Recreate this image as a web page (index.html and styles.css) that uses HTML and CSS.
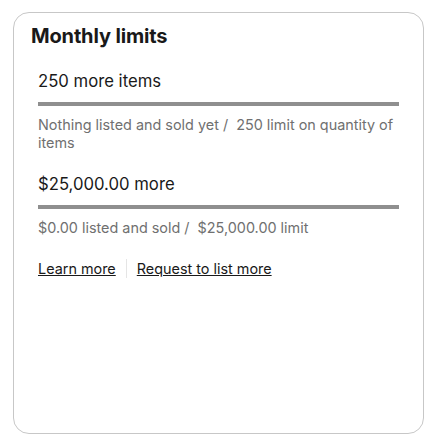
FILE: index.html
```html
<!DOCTYPE html>
<html>
<head>
<meta charset="utf-8">
<link rel="stylesheet" href="styles.css">
</head>
<body>
<section class="card">
  <h2 class="title">Monthly limits</h2>
  <div class="content">
    <div class="limit">
      <div class="amount">250 more items</div>
      <div class="bar"></div>
      <div class="desc">Nothing listed and sold yet /&nbsp; 250 limit on quantity of items</div>
    </div>
    <div class="limit">
      <div class="amount">$25,000.00 more</div>
      <div class="bar"></div>
      <div class="desc">$0.00 listed and sold /&nbsp; $25,000.00 limit</div>
    </div>
    <div class="links">
      <a href="#" class="link">Learn more</a>
      <span class="sep"></span>
      <a href="#" class="link">Request to list more</a>
    </div>
  </div>
</section>
</body>
</html>
```
FILE: styles.css
```css
html, body {
  margin: 0;
  padding: 0;
  background: #fff;
}
body {
  font-family: "Inter", "Liberation Sans", sans-serif;
  color: #191919;
  padding: 12px 3px 0 13px;
}
.card {
  box-sizing: border-box;
  width: 411px;
  height: 422px;
  border: 1px solid #c7c7c7;
  border-radius: 16px;
  padding: 11px 24px 0 17px;
}
.title {
  margin: 0;
  font-size: 20px;
  font-weight: 700;
  line-height: 24px;
  letter-spacing: -0.15px;
}
.content {
  padding-left: 7px;
  padding-top: 23px;
}
.limit {
  margin-bottom: 22px;
}
.amount {
  font-size: 16.7px;
  line-height: 20px;
}
.bar {
  height: 4px;
  background: #8f8f8f;
  margin-top: 11px;
  margin-bottom: 10px;
}
.desc {
  font-size: 14.4px;
  line-height: 18px;
  color: #707070;
}
.links {
  display: flex;
  align-items: center;
  gap: 10px;
}
.link {
  font-size: 14.4px;
  line-height: 18px;
  color: #191919;
  text-decoration: underline;
}
.sep {
  width: 1px;
  height: 19px;
  background: #e5e5e5;
}
```
